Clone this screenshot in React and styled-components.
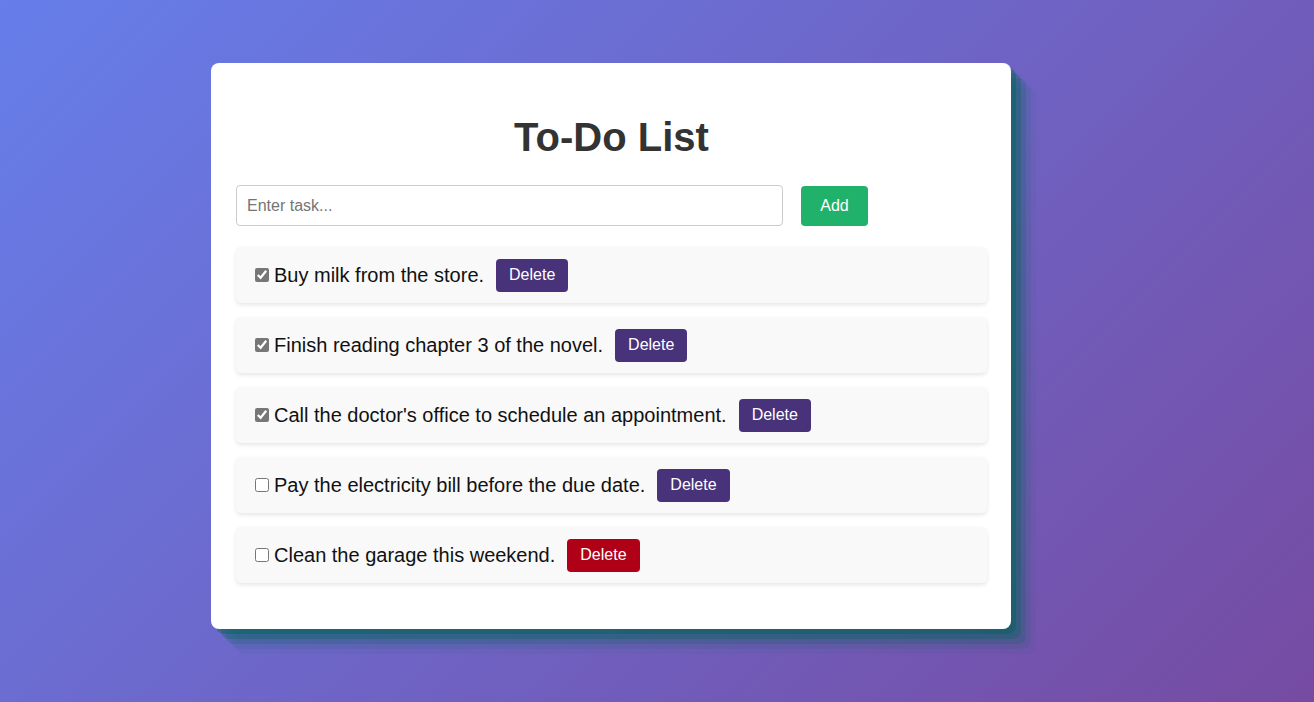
import React, { useState } from "react";
import styled, { createGlobalStyle } from "styled-components";

const GlobalStyle = createGlobalStyle`
  html, body {
    margin: 0;
    padding: 0;
  }
  body {
    min-height: 100vh;
    background: linear-gradient(135deg, #667eea 0%, #764ba2 100%);
    font-family: "Liberation Sans", Arial, sans-serif;
  }
`;

const Page = styled.div`
  min-height: 100vh;
  box-sizing: border-box;
  display: flex;
  justify-content: center;
  align-items: flex-start;
  padding: 63px 92px 0 0;
`;

const Card = styled.div`
  width: 800px;
  box-sizing: border-box;
  background: #fff;
  border-radius: 8px;
  padding: 25px 24px 25px 25px;
  box-shadow: rgba(0, 100, 86, 0.4) 5px 5px, rgba(0, 100, 86, 0.3) 10px 10px,
    rgba(0, 100, 86, 0.2) 15px 15px, rgba(0, 100, 86, 0.1) 20px 20px,
    rgba(0, 100, 86, 0.05) 25px 25px;
`;

const Title = styled.h1`
  margin: 26px 0 25px;
  text-align: center;
  font-size: 40px;
  line-height: 46px;
  font-weight: 700;
  color: #333;
`;

const InputRow = styled.div`
  display: flex;
  align-items: center;
  gap: 18px;
  margin-bottom: 21px;
`;

const TaskInput = styled.input`
  width: 547px;
  height: 41px;
  box-sizing: border-box;
  padding: 0 10px;
  border: 1px solid #ccc;
  border-radius: 4px;
  font-family: "Liberation Sans", Arial, sans-serif;
  font-size: 16px;
  color: #333;
  outline: none;
  &::placeholder {
    color: #757575;
  }
`;

const AddButton = styled.button`
  width: 67px;
  height: 40px;
  border: none;
  border-radius: 4px;
  background: #20b26a;
  color: #fff;
  font-family: "Liberation Sans", Arial, sans-serif;
  font-size: 16px;
  cursor: pointer;
`;

const List = styled.ul`
  list-style: none;
  margin: 0 0 21px;
  padding: 0;
  display: flex;
  flex-direction: column;
  gap: 14px;
`;

const Item = styled.li`
  display: flex;
  align-items: center;
  height: 56px;
  box-sizing: border-box;
  padding: 0 15px;
  background: #f9f9f9;
  border-radius: 5px;
  box-shadow: 0 2px 4px rgba(0, 0, 0, 0.1);
`;

const Check = styled.input`
  width: 14px;
  height: 14px;
  margin: 0 2px 0 4px;
  accent-color: #777;
`;

const ItemText = styled.span`
  font-size: 20px;
  color: #111;
  margin-left: 3px;
`;

const DeleteButton = styled.button`
  margin-left: 12px;
  height: 33px;
  padding: 0 13px;
  border: none;
  border-radius: 4px;
  background: ${(p) => (p.$danger ? "#b00018" : "#48327a")};
  color: #fff;
  font-family: "Liberation Sans", Arial, sans-serif;
  font-size: 16px;
  cursor: pointer;
`;

const initial = [
  { text: "Buy milk from the store.", done: true },
  { text: "Finish reading chapter 3 of the novel.", done: true },
  { text: "Call the doctor's office to schedule an appointment.", done: true },
  { text: "Pay the electricity bill before the due date.", done: false },
  { text: "Clean the garage this weekend.", done: false, danger: true },
];

export default function App() {
  const [tasks, setTasks] = useState(initial);
  const [value, setValue] = useState("");

  const toggle = (i) =>
    setTasks((t) => t.map((x, j) => (j === i ? { ...x, done: !x.done } : x)));
  const remove = (i) => setTasks((t) => t.filter((_, j) => j !== i));
  const add = () => {
    if (!value.trim()) return;
    setTasks((t) => [...t, { text: value.trim(), done: false }]);
    setValue("");
  };

  return (
    <>
      <GlobalStyle />
      <Page>
        <Card>
          <Title>To-Do List</Title>
          <InputRow>
            <TaskInput
              placeholder="Enter task..."
              value={value}
              onChange={(e) => setValue(e.target.value)}
            />
            <AddButton onClick={add}>Add</AddButton>
          </InputRow>
          <List>
            {tasks.map((t, i) => (
              <Item key={i}>
                <Check type="checkbox" checked={t.done} onChange={() => toggle(i)} />
                <ItemText>{t.text}</ItemText>
                <DeleteButton $danger={t.danger} onClick={() => remove(i)}>
                  Delete
                </DeleteButton>
              </Item>
            ))}
          </List>
        </Card>
      </Page>
    </>
  );
}
